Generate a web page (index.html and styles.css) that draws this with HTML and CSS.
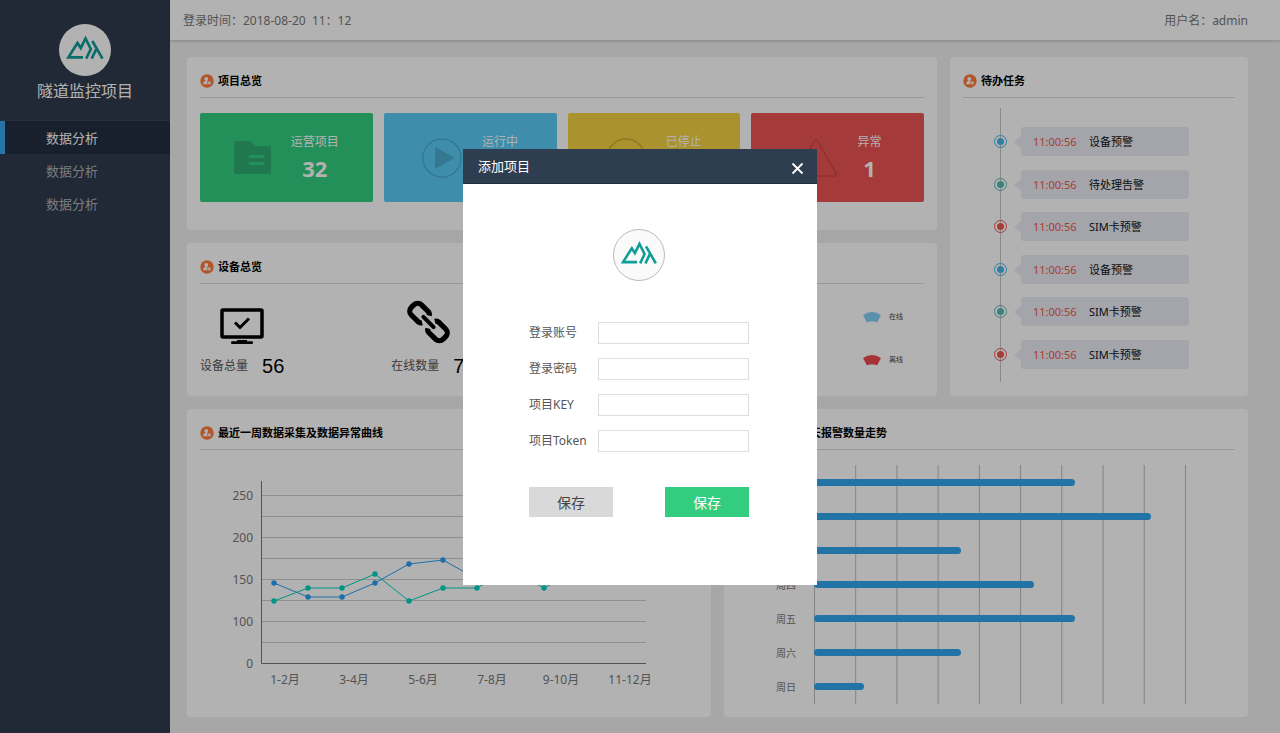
FILE: index.html
```html
<!DOCTYPE html>
<html lang="zh-CN">
<head>
    <meta charset="UTF-8">
    <meta name="viewport" content="width=device-width, initial-scale=1.0">
    <title>隧道监控项目</title>
    <link rel="stylesheet" href="styles.css">
</head>
<body>
    <svg class="defs" aria-hidden="true">
        <symbol id="logo" viewBox="0 0 52 52">
            <g fill="none" stroke="#0f9d98" stroke-width="2.7">
                <path d="M24 33.400H9.400L18.500 19l3.300 5 4.700-9.500 5.300 10.500-4.600 9.700"/>
                <path d="M33.300 17l10.200 17.700M37.300 25l-4.600 9.700"/>
            </g>
        </symbol>
        <symbol id="badge" viewBox="0 0 14 14">
            <circle cx="7" cy="7" r="6.7" fill="#ff7a3d"/>
            <circle cx="6.3" cy="5" r="1.9" fill="#fff"/>
            <path d="M3 10.2c0-2 1.3-3 2.5-3.2h2l1 3.2z" fill="#fff"/>
            <circle cx="9.2" cy="8.9" r="2" fill="#fff" stroke="#ff7a3d" stroke-width=".7"/>
            <path d="M8.3 8.8l.8.8 1-1.2" fill="none" stroke="#ff7a3d" stroke-width=".6"/>
        </symbol>
    </svg>

    <aside class="sidebar">
        <div class="brand">
            <svg class="brand-logo" viewBox="0 0 52 52"><use href="#logo"/></svg>
            <h1>隧道监控项目</h1>
        </div>
        <nav>
            <a href="#" class="active">数据分析</a>
            <a href="#">数据分析</a>
            <a href="#">数据分析</a>
        </nav>
    </aside>

    <div class="page">
        <header class="topbar">
            <span>登录时间：2018-08-20&nbsp; 11：12</span>
            <span>用户名：admin</span>
        </header>

        <main>
            <div class="row-top">
                <div class="stack">
                    <section class="card">
                        <h2><svg class="badge"><use href="#badge"/></svg>项目总览</h2>
                        <div class="tiles">
                            <div class="tile green">
                                <svg width="37" height="33" viewBox="0 0 37 33">
                                    <path d="M0 2a2 2 0 0 1 2-2h14l5 5h14a2 2 0 0 1 2 2v24a2 2 0 0 1-2 2H2a2 2 0 0 1-2-2z" fill="#2fae70"/>
                                    <path d="M16 15.500h13M16 22.500h13" stroke="#33ce81" stroke-width="3" stroke-linecap="round"/>
                                </svg>
                                <p>运营项目<strong>32</strong></p>
                            </div>
                            <div class="tile blue">
                                <svg width="40" height="40" viewBox="0 0 40 40">
                                    <circle cx="20" cy="20" r="19" fill="none" stroke="#4cadd0" stroke-width="1.500"/>
                                    <path d="M13 10.500a1 1 0 0 1 1.500-.8l17 9.500a1 1 0 0 1 0 1.600l-17 9.500a1 1 0 0 1-1.500-.8z" fill="#4cadd0"/>
                                </svg>
                                <p>运行中<strong>&nbsp;</strong></p>
                            </div>
                            <div class="tile yellow">
                                <svg width="40" height="40" viewBox="0 0 40 40">
                                    <circle cx="20" cy="20" r="19" fill="none" stroke="#cbae36" stroke-width="1.500"/>
                                    <path d="M15 13v14M25 13v14" stroke="#cbae36" stroke-width="4"/>
                                </svg>
                                <p>已停止<strong>&nbsp;</strong></p>
                            </div>
                            <div class="tile red">
                                <svg width="44" height="38" viewBox="0 0 44 38">
                                    <path d="M20.500 2a1.700 1.700 0 0 1 3 0l19 33a1.500 1.500 0 0 1-1.300 2H2.800a1.500 1.500 0 0 1-1.300-2z" fill="none" stroke="#cb474a" stroke-width="1.500"/>
                                </svg>
                                <p>异常<strong>1</strong></p>
                            </div>
                        </div>
                    </section>

                    <section class="card">
                        <h2><svg class="badge"><use href="#badge"/></svg>设备总览</h2>
                        <div class="devices">
                            <div class="device">
                                <svg width="44" height="44" viewBox="0 0 44 44">
                                    <rect x="2" y="10" width="40" height="27" rx="1" fill="none" stroke="#000" stroke-width="3.500"/>
                                    <path d="M15 22.500l5 5 9-9" fill="none" stroke="#000" stroke-width="3"/>
                                    <rect x="17" y="40" width="10" height="2"/>
                                    <rect x="11" y="41.300" width="22" height="2.700" rx="1.200"/>
                                </svg>
                                <p>设备总量<span>56</span></p>
                            </div>
                            <div class="device">
                                <svg width="44" height="44" viewBox="0 0 44 44">
                                    <g transform="translate(22.500 22) rotate(45) scale(.9) translate(-22 -22)" fill="none" stroke="#000" stroke-width="5.800">
                                        <path d="M17.500 27.500a5 5 0 0 1-4 2.500H3a6 6 0 0 1-6-6v-4a6 6 0 0 1 6-6h10.500a5 5 0 0 1 4 2.500"/>
                                        <path d="M26.500 27.500a5 5 0 0 0 4 2.500H41a6 6 0 0 0 6-6v-4a6 6 0 0 0-6-6H30.500a5 5 0 0 0-4 2.500"/>
                                        <path d="M14 22h16" stroke-width="4.500" stroke-linecap="round"/>
                                    </g>
                                </svg>
                                <p>在线数量<span>7</span></p>
                            </div>
                            <ul class="legend">
                                <li><svg width="18" height="11" viewBox="0 0 18 11"><path d="M0 3q9-6 18 0l-4 7.500q-5-2.500-10 0z" fill="#84cdf5"/></svg>在线</li>
                                <li><svg width="18" height="11" viewBox="0 0 18 11"><path d="M0 3q9-6 18 0l-4 7.500q-5-2.500-10 0z" fill="#ec4a4c"/></svg>离线</li>
                            </ul>
                        </div>
                    </section>
                </div>

                <section class="card todo">
                    <h2><svg class="badge"><use href="#badge"/></svg>待办任务</h2>
                    <ul class="timeline">
                        <li class="t-blue"><div><time>11:00:56</time>设备预警</div></li>
                        <li class="t-teal"><div><time>11:00:56</time>待处理告警</div></li>
                        <li class="t-red"><div><time>11:00:56</time>SIM卡预警</div></li>
                        <li class="t-blue"><div><time>11:00:56</time>设备预警</div></li>
                        <li class="t-teal"><div><time>11:00:56</time>SIM卡预警</div></li>
                        <li class="t-red"><div><time>11:00:56</time>SIM卡预警</div></li>
                    </ul>
                </section>
            </div>

            <div class="row-bottom">
                <section class="card">
                    <h2><svg class="badge"><use href="#badge"/></svg>最近一周数据采集及数据异常曲线</h2>
                    <svg class="line-chart" viewBox="0 0 498 266">
                        <path class="grid" d="M62 45.500H446M62 66.500H446M62 87.500H446M62 108.500H446M62 129.500H446M62 150.500H446M62 171.500H446M62 192.500H446"/>
                        <path class="axis" d="M61.500 31V213.500H446"/>
                        <g class="y-labels">
                            <text x="53" y="50">250</text>
                            <text x="53" y="92">200</text>
                            <text x="53" y="134">150</text>
                            <text x="53" y="176">100</text>
                            <text x="53" y="218">0</text>
                        </g>
                        <g class="x-labels">
                            <text x="85" y="234">1-2月</text>
                            <text x="154" y="234">3-4月</text>
                            <text x="223" y="234">5-6月</text>
                            <text x="292" y="234">7-8月</text>
                            <text x="361" y="234">9-10月</text>
                            <text x="430" y="234">11-12月</text>
                        </g>
                        <g class="s-blue">
                            <polyline points="74,133 108,147 142,147 175,133 209,114 243,110 277,129 310,110 344,105 378,120"/>
                            <circle cx="74" cy="133" r="2.700"/><circle cx="108" cy="147" r="2.700"/><circle cx="142" cy="147" r="2.700"/><circle cx="175" cy="133" r="2.700"/><circle cx="209" cy="114" r="2.700"/><circle cx="243" cy="110" r="2.700"/><circle cx="277" cy="129" r="2.700"/>
                        </g>
                        <g class="s-green">
                            <polyline points="74,151 108,138 142,138 175,124 209,151 243,138 277,138 310,120 344,138 378,120"/>
                            <circle cx="74" cy="151" r="2.700"/><circle cx="108" cy="138" r="2.700"/><circle cx="142" cy="138" r="2.700"/><circle cx="175" cy="124" r="2.700"/><circle cx="209" cy="151" r="2.700"/><circle cx="243" cy="138" r="2.700"/><circle cx="277" cy="138" r="2.700"/><circle cx="310" cy="120" r="2.700"/><circle cx="344" cy="138" r="2.700"/>
                        </g>
                    </svg>
                </section>

                <section class="card">
                    <h2><svg class="badge"><use href="#badge"/></svg>设备最近七天报警数量走势</h2>
                    <div class="bar-chart">
                        <div class="bar-labels">
                            <span>周一</span>
                            <span>周二</span>
                            <span>周三</span>
                            <span>周四</span>
                            <span>周五</span>
                            <span>周六</span>
                            <span>周日</span>
                        </div>
                        <div class="plot">
                            <div><i style="width: 70.2%"></i></div>
                            <div><i style="width: 90.6%"></i></div>
                            <div><i style="width: 39.5%"></i></div>
                            <div><i style="width: 59.1%"></i></div>
                            <div><i style="width: 70.2%"></i></div>
                            <div><i style="width: 39.5%"></i></div>
                            <div><i style="width: 13.4%"></i></div>
                        </div>
                    </div>
                </section>
            </div>
        </main>
    </div>

    <div class="overlay">
        <div class="modal" role="dialog" aria-labelledby="modal-title">
            <div class="modal-header">
                <h2 id="modal-title">添加项目</h2>
                <button type="button" class="close" aria-label="关闭">
                    <svg width="13" height="13" viewBox="0 0 13 13"><path d="M1.500 1.500l10 10M11.500 1.500l-10 10" stroke="#fff" stroke-width="1.800"/></svg>
                </button>
            </div>
            <form>
                <svg class="modal-logo" viewBox="0 0 52 52"><use href="#logo"/></svg>
                <div class="field">
                    <label for="account">登录账号</label>
                    <input type="text" id="account">
                </div>
                <div class="field">
                    <label for="password">登录密码</label>
                    <input type="password" id="password">
                </div>
                <div class="field">
                    <label for="key">项目KEY</label>
                    <input type="text" id="key">
                </div>
                <div class="field">
                    <label for="token">项目Token</label>
                    <input type="text" id="token">
                </div>
                <div class="actions">
                    <button type="button" class="btn">保存</button>
                    <button type="button" class="btn btn-primary">保存</button>
                </div>
            </form>
        </div>
    </div>
</body>
</html>
```
FILE: styles.css
```css
*, *::before {
    box-sizing: border-box;
}
body {
    display: flex;
    min-height: 100vh;
    margin: 0;
    background: #efefef;
    color: #000;
    font-family: "Noto Sans", "Noto Sans CJK SC", sans-serif;
    font-size: 12px;
    line-height: 18px;
}
h1, h2, p, ul {
    margin: 0;
    padding: 0;
}
ul {
    list-style: none;
}
.defs {
    position: absolute;
    width: 0;
    height: 0;
}

/* sidebar */
.sidebar {
    flex: 0 0 170px;
    background: #2e3c4d;
}
.brand {
    display: flex;
    flex-direction: column;
    align-items: center;
    height: 121px;
    padding-top: 24px;
    border-bottom: 1px solid #3b4654;
}
.brand-logo {
    width: 52px;
    height: 52px;
    border-radius: 50%;
    background: #fff;
}
.brand h1 {
    margin-top: 3px;
    color: #fff;
    font-size: 16px;
    font-weight: normal;
    line-height: 24px;
}
nav a {
    display: block;
    height: 33px;
    padding-left: 41px;
    border-left: 5px solid transparent;
    color: #aeb3ba;
    font-size: 13px;
    line-height: 35px;
    text-decoration: none;
}
nav a.active {
    border-left-color: #3aa6ee;
    background: #222e40;
    color: #fff;
}

/* content */
.page {
    flex: 1;
    min-width: 0;
}
.topbar {
    display: flex;
    justify-content: space-between;
    height: 40px;
    padding: 0 32px 0 13px;
    background: #fff;
    box-shadow: 0 1px 3px rgba(0, 0, 0, .2);
    color: #777;
    line-height: 41px;
}
main {
    display: flex;
    flex-direction: column;
    gap: 13px;
    padding: 17px 32px 17px 17px;
}
.row-top {
    display: grid;
    grid-template-columns: minmax(0, 1fr) 298px;
    gap: 13px;
}
.row-bottom {
    display: grid;
    grid-template-columns: 1fr 1fr;
    gap: 13px;
}
.stack {
    display: flex;
    flex-direction: column;
    gap: 13px;
}
.card {
    min-width: 0;
    padding: 0 13px;
    border-radius: 4px;
    background: #fff;
}
.card h2 {
    display: flex;
    align-items: center;
    gap: 4px;
    height: 41px;
    padding-top: 8px;
    border-bottom: 1px solid #dcdcdc;
    font-size: 11px;
    line-height: 16px;
}
.badge {
    width: 14px;
    height: 14px;
}

/* project tiles */
.tiles {
    display: grid;
    grid-template-columns: repeat(4, 1fr);
    gap: 11px;
    padding: 15px 0 28px;
}
.tile {
    display: flex;
    align-items: center;
    justify-content: center;
    gap: 20px;
    height: 89px;
    border-radius: 2px;
    color: #fff;
}
.tile p {
    padding-top: 2px;
    text-align: center;
}
.tile strong {
    display: block;
    font-size: 22px;
    line-height: 34px;
}
.green {
    background: #33ce81;
}
.blue {
    background: #59cbf4;
}
.yellow {
    background: #f4d143;
}
.red {
    background: #ec5353;
}

/* devices */
.devices {
    display: flex;
    gap: 107px;
    height: 112px;
    padding-top: 16px;
}
.device {
    display: flex;
    flex-direction: column;
    align-items: center;
    gap: 10px;
}
.device svg {
    overflow: visible;
}
.device p {
    display: flex;
    align-items: center;
    gap: 14px;
    height: 24px;
    color: #555;
}
.device span {
    color: #000;
    font-family: "Liberation Sans", sans-serif;
    font-size: 20px;
}
.legend {
    display: flex;
    flex-direction: column;
    gap: 25px;
    margin: 8px 21px 0 auto;
    color: #444;
    font-size: 7px;
}
.legend li {
    display: flex;
    align-items: center;
    gap: 8px;
}

/* todo timeline */
.todo {
    display: flex;
    flex-direction: column;
}
.timeline {
    position: relative;
    display: flex;
    flex: 1;
    flex-direction: column;
    justify-content: space-between;
    margin: 10px 46px 14px 31px;
    padding: 19px 0 13px;
}
.timeline::before {
    content: "";
    position: absolute;
    top: 0;
    bottom: 0;
    left: 6px;
    width: 1px;
    background: #c4c4c4;
}
.timeline li {
    position: relative;
    display: flex;
    align-items: center;
    gap: 14px;
}
.timeline li::before {
    content: "";
    width: 13px;
    height: 13px;
    padding: 2px;
    border: 1px solid currentColor;
    border-radius: 50%;
    background: currentColor content-box;
}
.t-blue {
    color: #46b7ea;
}
.t-teal {
    color: #58b9b4;
}
.t-red {
    color: #f0554d;
}
.timeline div {
    position: relative;
    flex: 1;
    height: 29px;
    padding-left: 12px;
    border-radius: 3px;
    background: #ebedf5;
    color: #111;
    font-size: 11px;
    line-height: 29px;
}
.timeline div::before {
    content: "";
    position: absolute;
    top: 9px;
    left: -7px;
    border: 6px solid transparent;
    border-right: 7px solid #ebedf5;
    border-left: 0;
}
.timeline time {
    display: inline-block;
    width: 56px;
    color: #f0554d;
}

/* line chart */
.line-chart {
    display: block;
    width: 100%;
}
.line-chart text {
    fill: #777;
    font-size: 12px;
}
.line-chart circle {
    stroke: none;
}
.grid {
    fill: none;
    stroke: #cdcdcd;
}
.axis {
    fill: none;
    stroke: #777;
}
.y-labels {
    text-anchor: end;
}
.x-labels {
    text-anchor: middle;
}
.line-chart polyline {
    fill: none;
}
.s-blue {
    fill: #289ff4;
    stroke: #289ff4;
}
.s-green {
    fill: #00d5c0;
    stroke: #00d5c0;
}

/* bar chart */
.bar-chart {
    display: flex;
    padding: 15px 49px 13px 39px;
}
.bar-labels {
    width: 38px;
    padding-top: 1px;
    color: #777;
    font-size: 10px;
}
.bar-labels span {
    display: block;
    height: 34px;
    line-height: 34px;
}
.plot {
    flex: 1;
    background-image: linear-gradient(to right, #bbb 1px, transparent 1px);
    background-size: calc((100% - 1px) / 9) 100%;
}
.plot div {
    display: flex;
    align-items: center;
    height: 34px;
}
.plot i {
    height: 7px;
    border-radius: 4px;
    background: #32a6f0;
}

/* add project dialog */
.overlay {
    position: fixed;
    inset: 0;
    display: flex;
    align-items: center;
    justify-content: center;
    background: rgba(0, 0, 0, .3);
}
.modal {
    width: 354px;
    background: #fff;
}
.modal-header {
    display: flex;
    align-items: center;
    justify-content: space-between;
    height: 35px;
    padding: 0 13px 0 15px;
    border-bottom: 1px solid #1f2d42;
    background: #2f3d50;
    color: #fff;
}
.modal-header h2 {
    font-size: 13px;
    font-weight: normal;
}
.close {
    display: flex;
    padding: 5px 0 0;
    border: 0;
    background: none;
    cursor: pointer;
}
form {
    display: flex;
    flex-direction: column;
    gap: 14px;
    padding: 45px 68px 68px 66px;
}
.modal-logo {
    align-self: center;
    width: 52px;
    height: 52px;
    margin-bottom: 27px;
    border: 1px solid #bbb;
    border-radius: 50%;
    background: #fafafa;
}
.field {
    display: flex;
    align-items: center;
    justify-content: space-between;
    color: #555;
}
.field input {
    width: 151px;
    height: 22px;
    border: 1px solid #ddd;
    background: #fff;
}
.actions {
    display: flex;
    justify-content: space-between;
    margin-top: 21px;
}
.btn {
    width: 84px;
    height: 30px;
    padding: 0;
    border: 0;
    background: #d9d9d9;
    color: #444;
    font-family: inherit;
    font-size: 14px;
    cursor: pointer;
}
.btn-primary {
    background: #33cd7f;
    color: #fff;
}
```
